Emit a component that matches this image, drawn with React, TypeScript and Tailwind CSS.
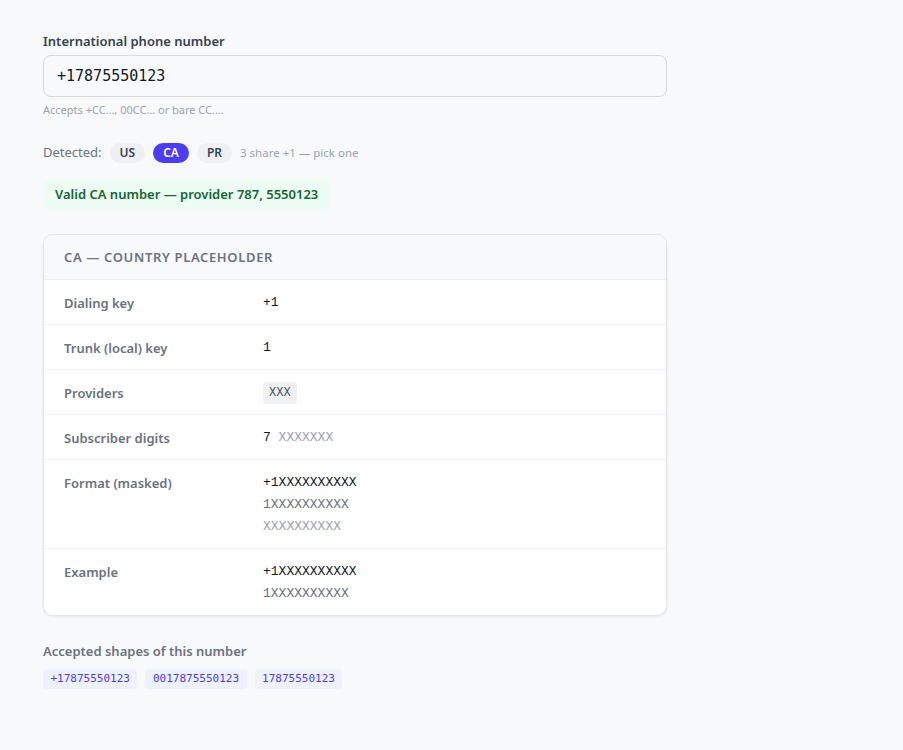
import React from 'react';

const sans = { fontFamily: '"Noto Sans", "Open Sans", sans-serif' };

function Row({ label, children, last }: { label: string; children: React.ReactNode; last?: boolean }) {
  return (
    <div className={`grid grid-cols-[199px_1fr] px-5 pt-[14px] pb-[12px] ${last ? '' : 'border-b border-[#f0f1f3]'}`}>
      <div className="text-[13px] font-semibold leading-[18px] text-[#6b7280]">{label}</div>
      <div className="font-['Liberation_Mono',monospace] text-[13px] leading-[18px] text-[#111827]">{children}</div>
    </div>
  );
}

export default function App() {
  const shapes = ['+17875550123', '0017875550123', '17875550123'];
  return (
    <div className="min-h-[750px] bg-[#f8f9fb] px-[43px] pt-[32px]" style={sans}>
      <div className="w-[624px]">
        <label className="block text-[13px] font-semibold leading-[18px] text-[#374151]">International phone number</label>
        <div className="mt-[5px] flex h-[42px] items-center rounded-lg border border-[#d5d8de] px-[13px]">
          <span className="font-['DejaVu_Sans_Mono',monospace] text-[15px] text-[#111827]">+17875550123</span>
        </div>
        <p className="mt-[5px] text-[11px] leading-[16px] text-[#9ca3af]">Accepts +CC…, 00CC… or bare CC….</p>

        <div className="mt-[25px] flex items-center gap-2">
          <span className="text-[13px] text-[#6b7280]">Detected:</span>
          <span className="rounded-full bg-[#eff0f3] px-[10px] py-[1px] text-[12px] font-semibold leading-[18px] text-[#374151]">US</span>
          <span className="rounded-full bg-[#4f3cf0] px-[10px] py-[1px] text-[12px] font-semibold leading-[18px] text-white">CA</span>
          <span className="rounded-full bg-[#eff0f3] px-[10px] py-[1px] text-[12px] font-semibold leading-[18px] text-[#374151]">PR</span>
          <span className="text-[11.5px] text-[#9ca3af]">3 share +1 — pick one</span>
        </div>

        <div className="mt-[16px] inline-flex h-[31px] items-center rounded-lg bg-[#edfdf3] px-3 text-[13px] font-semibold text-[#166534]">
          Valid CA number — provider 787, 5550123
        </div>

        <div className="mt-[24px] overflow-hidden rounded-[10px] border border-[#e3e5e9] bg-white shadow-[0_1px_3px_rgba(0,0,0,0.08)]">
          <div className="border-b border-[#eceef1] bg-[#f8f9fb] px-5 py-[13px] text-[13px] font-semibold uppercase leading-[18px] tracking-wider text-[#6b7280]">
            CA — Country placeholder
          </div>
          <Row label="Dialing key">+1</Row>
          <Row label="Trunk (local) key">1</Row>
          <Row label="Providers">
            <span className="-my-[2px] inline-block rounded bg-[#f0f1f3] px-[6px] py-[2px] align-top text-[12px] leading-[18px] text-[#4b5563]">XXX</span>
          </Row>
          <Row label="Subscriber digits">
            7 <span className="text-[#9ca3af]">XXXXXXX</span>
          </Row>
          <Row label="Format (masked)">
            <div>+1XXXXXXXXXX</div>
            <div className="mt-1 text-[#6b7280]">1XXXXXXXXXX</div>
            <div className="mt-1 text-[#9ca3af]">XXXXXXXXXX</div>
          </Row>
          <Row label="Example" last>
            <div>+1XXXXXXXXXX</div>
            <div className="mt-1 text-[#6b7280]">1XXXXXXXXXX</div>
          </Row>
        </div>

        <div className="mt-[26px] text-[13px] font-semibold leading-[18px] text-[#6b7280]">Accepted shapes of this number</div>
        <div className="mt-[9px] flex gap-2">
          {shapes.map((s) => (
            <span key={s} className="rounded bg-[#eef1ff] px-[7.5px] py-[2px] font-['DejaVu_Sans_Mono',monospace] text-[11px] leading-[16px] text-[#4f3cf0]">
              {s}
            </span>
          ))}
        </div>
      </div>
    </div>
  );
}
